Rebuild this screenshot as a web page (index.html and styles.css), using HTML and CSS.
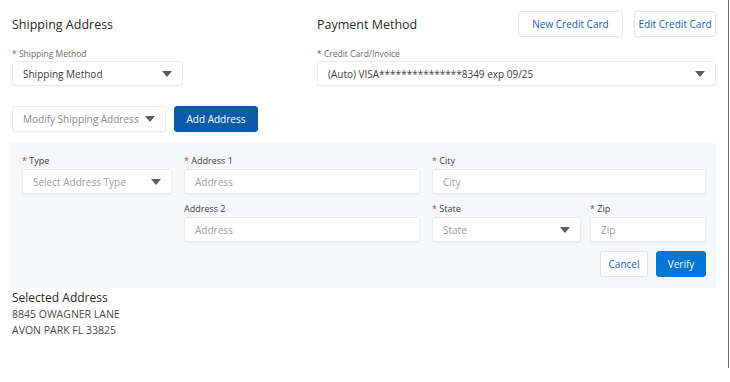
FILE: index.html
```html
<!DOCTYPE html>
<html lang="en">
<head>
    <meta charset="UTF-8">
    <meta name="viewport" content="width=device-width, initial-scale=1.0">
    <title>Checkout</title>
    <link rel="stylesheet" href="styles.css">
</head>
<body>
    <div class="page">

        <div class="top-row">
            <!-- shipping column -->
            <div class="col-left">
                <div class="section-head">
                    <h2>Shipping Address</h2>
                </div>
                <div class="label"><span class="req">*</span> Shipping Method</div>
                <div class="select ship-method">
                    <span>Shipping Method</span>
                    <span class="arrow"></span>
                </div>
            </div>

            <!-- payment column -->
            <div class="col-right">
                <div class="section-head">
                    <h2>Payment Method</h2>
                    <div class="head-buttons">
                        <button class="btn btn-outline btn-new">New Credit Card</button>
                        <button class="btn btn-outline btn-edit">Edit Credit Card</button>
                    </div>
                </div>
                <div class="label"><span class="req">*</span> Credit Card/Invoice</div>
                <div class="select card-select">
                    <span>(Auto) VISA***************8349 exp 09/25</span>
                    <span class="arrow"></span>
                </div>
            </div>
        </div>

        <div class="modify-row">
            <div class="select modify-select placeholder">
                <span>Modify Shipping Address</span>
                <span class="arrow"></span>
            </div>
            <button class="btn btn-brand btn-add">Add Address</button>
        </div>

        <div class="address-panel">
            <div class="field f-type">
                <div class="label dark"><span class="req">*</span> Type</div>
                <div class="select placeholder">
                    <span>Select Address Type</span>
                    <span class="arrow"></span>
                </div>
            </div>
            <div class="field f-addr1">
                <div class="label dark"><span class="req">*</span> Address 1</div>
                <div class="input">Address</div>
            </div>
            <div class="field f-city">
                <div class="label dark"><span class="req">*</span> City</div>
                <div class="input">City</div>
            </div>
            <div class="field f-addr2">
                <div class="label dark">Address 2</div>
                <div class="input">Address</div>
            </div>
            <div class="f-state-zip">
                <div class="field f-state">
                    <div class="label dark"><span class="req">*</span> State</div>
                    <div class="select placeholder">
                        <span>State</span>
                        <span class="arrow"></span>
                    </div>
                </div>
                <div class="field f-zip">
                    <div class="label dark"><span class="req">*</span> Zip</div>
                    <div class="input">Zip</div>
                </div>
            </div>
            <div class="panel-actions">
                <button class="btn btn-outline btn-cancel">Cancel</button>
                <button class="btn btn-verify">Verify</button>
            </div>
        </div>

        <div class="selected">
            <h3>Selected Address</h3>
            <p>8845 OWAGNER LANE</p>
            <p>AVON PARK FL 33825</p>
        </div>

    </div>
</body>
</html>
```

FILE: styles.css
```css
body {
    margin: 0;
    font-family: 'Open Sans', 'Noto Sans', sans-serif;
    color: #3e3e3c;
    background: #ffffff;
}

.page {
    width: 729px;
    height: 368px;
    border-right: 1px solid #6b6b6b;
    padding-top: 11px;
    box-sizing: border-box;
}

h2 {
    margin: 0;
    font-size: 12.5px;
    font-weight: 400;
    color: #2b2826;
}

/* top row: shipping + payment */
.top-row {
    display: flex;
    padding-left: 12px;
}

.col-left {
    width: 305px;
}

.col-right {
    width: 399px;
}

.section-head {
    height: 26px;
    display: flex;
    align-items: center;
    justify-content: space-between;
}

.head-buttons {
    display: flex;
    gap: 11px;
}

.label {
    font-size: 8.5px;
    color: #6b6b6b;
    margin-top: 10px;
    height: 14px;
    line-height: 14px;
}

.label.dark {
    color: #3e3e3c;
    margin-top: 0;
    height: 15px;
    line-height: 14px;
    font-size: 9px;
}

.req {
    color: #c23934;
}

.select,
.input {
    height: 25px;
    box-sizing: border-box;
    background: #ffffff;
    border: 1px solid #ececec;
    border-radius: 3px;
    box-shadow: 0 1px 1px rgba(0, 0, 0, 0.04);
    font-size: 10px;
    color: #3e3e3c;
    display: flex;
    align-items: center;
    justify-content: space-between;
    padding: 0 10px;
}

.input {
    color: #a0a0a0;
}

.select.placeholder {
    color: #a0a0a0;
}

.modify-select.placeholder {
    color: #8a8a8a;
}

.arrow {
    width: 0;
    height: 0;
    border-left: 5px solid transparent;
    border-right: 5px solid transparent;
    border-top: 6px solid #5c5c5c;
}

.ship-method {
    width: 171px;
}

.card-select {
    width: 399px;
}

/* buttons */
.btn {
    font-family: inherit;
    height: 26px;
    border-radius: 3px;
    font-size: 10px;
    padding: 0;
    cursor: pointer;
}

.btn-outline {
    background: #ffffff;
    border: 1px solid #e3e3e3;
    color: #0b64c4;
}

.btn-new {
    width: 105px;
}

.btn-edit {
    width: 82px;
}

.btn-brand {
    background: #0b5cab;
    border: 1px solid #0b5cab;
    color: #ffffff;
}

.btn-verify {
    width: 50px;
    background: #0176d3;
    border: 1px solid #0176d3;
    color: #ffffff;
}

.btn-cancel {
    width: 48px;
}

/* modify row */
.modify-row {
    display: flex;
    align-items: center;
    gap: 8px;
    padding-left: 12px;
    margin-top: 20px;
}

.modify-select {
    width: 154px;
    height: 26px;
}

.btn-add {
    width: 84px;
}

/* address panel */
.address-panel {
    margin: 11px 0 0 10px;
    width: 706px;
    height: 145px;
    box-sizing: border-box;
    background: #f5f8fb;
    padding: 11px 10px 0 12px;
    display: grid;
    grid-template-columns: 150px 236px 274px;
    column-gap: 12px;
    row-gap: 8px;
    align-content: start;
    grid-template-areas:
        "type addr1 city"
        ".    addr2 statezip"
        ".    .     actions";
}

.f-type { grid-area: type; }
.f-addr1 { grid-area: addr1; }
.f-city { grid-area: city; }
.f-addr2 { grid-area: addr2; }

.f-state-zip {
    grid-area: statezip;
    display: flex;
    gap: 9px;
}

.f-state {
    width: 149px;
}

.f-zip {
    width: 116px;
}

.panel-actions {
    grid-area: actions;
    display: flex;
    justify-content: flex-end;
    gap: 8px;
    margin-top: 1px;
}

/* selected address */
.selected {
    padding-left: 12px;
    margin-top: 2px;
}

.selected h3 {
    margin: 0;
    font-size: 12px;
    font-weight: 400;
    color: #2b2826;
    line-height: 16px;
}

.selected p {
    margin: 0;
    font-size: 10.5px;
    color: #4a4a4a;
    line-height: 16px;
}
```
